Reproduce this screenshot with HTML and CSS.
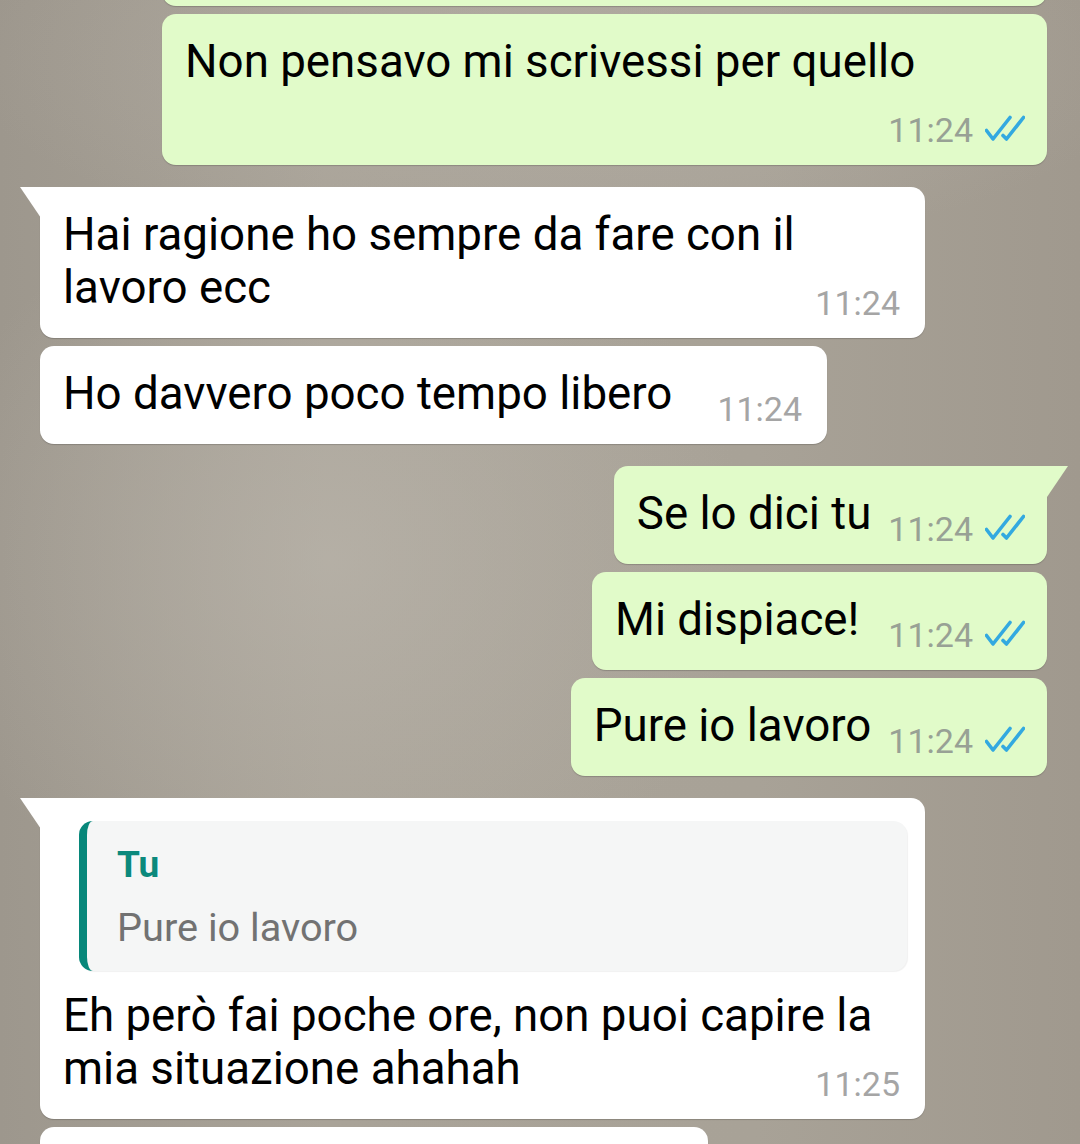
FILE: index.html
```html
<!DOCTYPE html>
<html lang="it">
<head>
    <title>Chat</title>
    <meta charset="UTF-8">
    <meta name="viewport" content="width=device-width, initial-scale=1">
    <link rel="stylesheet" href="styles.css">
</head>
<body>
    <div class="chat">
        <!-- messaggio precedente, solo il bordo inferiore -->
        <div class="bubble out full stub"></div>

        <div class="bubble out full">
            <span class="text">Non pensavo mi scrivessi per quello</span>
            <span class="meta"><span class="time">11:24</span><svg class="ticks" viewBox="0 0 40 27"><polyline points="1.5,15.5 8,24 25,2.5"/><polyline points="18,20.5 21.5,24 38.5,2.5"/></svg></span>
        </div>

        <div class="bubble in full tail group">
            <span class="text">Hai ragione ho sempre da fare con il lavoro ecc</span>
            <span class="meta"><span class="time">11:24</span></span>
        </div>

        <div class="bubble in roomy">
            <span class="text">Ho davvero poco tempo libero</span>
            <span class="meta"><span class="time">11:24</span></span>
        </div>

        <div class="bubble out tail group">
            <span class="text">Se lo dici tu</span>
            <span class="meta"><span class="time">11:24</span><svg class="ticks" viewBox="0 0 40 27"><polyline points="1.5,15.5 8,24 25,2.5"/><polyline points="18,20.5 21.5,24 38.5,2.5"/></svg></span>
        </div>

        <div class="bubble out wide">
            <span class="text">Mi dispiace!</span>
            <span class="meta"><span class="time">11:24</span><svg class="ticks" viewBox="0 0 40 27"><polyline points="1.5,15.5 8,24 25,2.5"/><polyline points="18,20.5 21.5,24 38.5,2.5"/></svg></span>
        </div>

        <div class="bubble out">
            <span class="text">Pure io lavoro</span>
            <span class="meta"><span class="time">11:24</span><svg class="ticks" viewBox="0 0 40 27"><polyline points="1.5,15.5 8,24 25,2.5"/><polyline points="18,20.5 21.5,24 38.5,2.5"/></svg></span>
        </div>

        <div class="bubble in full tail group">
            <div class="quote">
                <div class="quote-name">Tu</div>
                <div class="quote-text">Pure io lavoro</div>
            </div>
            <span class="text">Eh però fai poche ore, non puoi capire la mia situazione ahahah</span>
            <span class="meta"><span class="time">11:25</span></span>
        </div>

        <!-- messaggio successivo, appena visibile -->
        <div class="bubble in peek"></div>
    </div>
</body>
</html>
```

FILE: styles.css
```css
* { box-sizing: border-box; }
body {
    margin: 0; width: 1080px; height: 1144px; overflow: hidden;
    font-family: Roboto, "Noto Sans", sans-serif;
    background:
        radial-gradient(ellipse 420px 380px at 330px 560px, rgba(190,185,176,0.55), rgba(190,185,176,0) 100%),
        radial-gradient(ellipse 600px 200px at 560px 60px, rgba(184,178,170,0.5), rgba(184,178,170,0) 100%),
        linear-gradient(90deg, #9d978d 0%, #a9a398 30%, #a8a297 70%, #a0998e 100%);
}
.chat { display: flex; flex-direction: column; padding: 0 33px 0 40px; }

.bubble {
    position: relative; display: flow-root; max-width: 885px; margin-top: 8px;
    padding: 21px 22px 15px 23px; border-radius: 14px;
    font-size: 45.7px; line-height: 53px; color: #000;
    box-shadow: 0 1px 1px rgba(0,0,0,0.18);
}
.in { align-self: flex-start; background: #fff; padding-right: 25px; }
.out { align-self: flex-end; background: #e1fbc9; }
.full { width: 885px; }
.group { margin-top: 22px; }

.tail::before { content: ""; position: absolute; top: 0; width: 21px; height: 31px; background: inherit; }
.in.tail { border-top-left-radius: 0; }
.in.tail::before { left: -20px; clip-path: polygon(0 0, 100% 0, 100% 100%); }
.out.tail { border-top-right-radius: 0; }
.out.tail::before { right: -21px; clip-path: polygon(0 0, 100% 0, 0 100%); }

.meta { float: right; display: flex; align-items: flex-end; margin: 22px 0 0 17px; font-size: 34px; line-height: 40px; }
.in .time { color: #a5a5a5; }
.out .time { color: #98a195; }
.ticks { width: 40px; height: 27px; margin: 0 0 8px 12px; fill: none; stroke: #33a9e0; stroke-width: 3.6; stroke-linecap: round; stroke-linejoin: round; }
.roomy .meta { margin-left: 45px; }
.wide .meta { margin-left: 29px; }

.stub { height: 60px; margin-top: -54px; }
.peek { width: 668px; height: 80px; }

.quote {
    margin: 2px -7px 18px 16px; padding: 22px 20px 20px 30px;
    background: #f5f6f6; border-left: 8px solid #07877a; border-radius: 14px;
    box-shadow: 1px 1px 1px rgba(0,0,0,0.06);
}
.quote-name { font-size: 37px; line-height: 44px; font-weight: 700; color: #0b897c; }
.quote-text { margin-top: 18px; font-size: 39.7px; line-height: 46px; color: #727272; }
```
